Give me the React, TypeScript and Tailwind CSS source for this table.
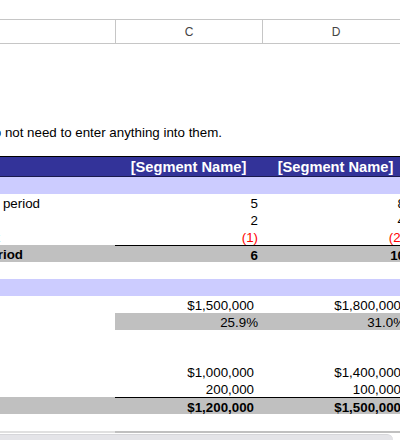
import React from 'react';

type Row = {
  label?: string;
  labelBox?: string;
  c?: string;
  d?: string;
  kind: 'plain' | 'total' | 'pct' | 'band' | 'blank';
  cur?: boolean;
  red?: boolean;
  line?: boolean;
};

const rows: Row[] = [
  { kind: 'band' },
  { label: 'Units at beginning of period', labelBox: 'w-[40px]', c: '5', d: '8', kind: 'plain' },
  { label: 'Units added', labelBox: 'w-[0px]', c: '2', d: '4', kind: 'plain' },
  { label: 'Units lost', labelBox: 'w-[0px]', c: '(1)', d: '(2)', kind: 'plain', red: true },
  { label: 'Units at end of period', labelBox: 'w-[23px]', c: '6', d: '10', kind: 'total', line: true },
  { kind: 'blank' },
  { kind: 'band' },
  { c: '$1,500,000', d: '$1,800,000', kind: 'plain', cur: true },
  { c: '25.9%', d: '31.0%', kind: 'pct' },
  { kind: 'blank' },
  { kind: 'blank' },
  { c: '$1,000,000', d: '$1,400,000', kind: 'plain', cur: true },
  { c: '200,000', d: '100,000', kind: 'plain', cur: true },
  { c: '$1,200,000', d: '$1,500,000', kind: 'total', cur: true, line: true },
  { kind: 'blank' },
];

function Cell({ v, row }: { v?: string; row: Row }) {
  const bg = row.kind === 'total' || row.kind === 'pct' ? 'bg-[#c0c0c0]' : '';
  const line = row.line ? 'border-t border-black' : '';
  const pad = row.cur ? 'pr-[8px]' : 'pr-[4px]';
  const weight = row.kind === 'total' ? 'font-bold' : '';
  const color = row.red ? 'text-[#ff0000]' : 'text-black';
  return (
    <div className={`h-[17px] pt-[2px] flex justify-end items-center ${bg} ${line} ${pad} ${weight} ${color}`}>
      {v}
    </div>
  );
}

export default function App() {
  return (
    <div className="w-[400px] h-[440px] overflow-hidden bg-white flex flex-col font-['Liberation_Sans',Arial,sans-serif] text-[13.33px] leading-[17px]">
      {/* column letters */}
      <div className="mt-[19px] h-[25px] border-y border-[#c6c6c6] grid grid-cols-[115px_147px_147px] text-[12px] text-[#444]">
        <div />
        <div className="border-l border-[#c6c6c6] pt-[2px] flex items-center justify-center">C</div>
        <div className="border-l border-[#c6c6c6] pt-[2px] flex items-center justify-center">D</div>
      </div>

      <div className="mt-[79px] h-[17px] pt-[1px] flex">
        <div className="w-[222px] shrink-0 flex justify-end whitespace-nowrap">
          These rows are calculated, so you do not need to enter anything into them.
        </div>
      </div>

      {/* segment header */}
      <div className="mt-[16px] h-[21px] border-t border-black bg-[#333399] grid grid-cols-[115px_147px_147px] text-white font-bold text-[14.67px]">
        <div />
        <div className="pt-[2px] flex items-center justify-center whitespace-nowrap">[Segment Name]</div>
        <div className="pt-[2px] flex items-center justify-center whitespace-nowrap">[Segment Name]</div>
      </div>
      <div className="h-px bg-[#1a1a4d]" />

      {rows.map((r, i) => {
        if (r.kind === 'band') return <div key={i} className="h-[17px] bg-[#ccccff]" />;
        if (r.kind === 'blank') return <div key={i} className="h-[17px]" />;
        const labelBg = r.kind === 'total' ? 'bg-[#c0c0c0]' : '';
        return (
          <div key={i} className="grid grid-cols-[115px_147px_147px] whitespace-nowrap">
            <div className={`h-[17px] pt-[2px] flex items-center ${labelBg} ${r.kind === 'total' ? 'font-bold' : ''}`}>
              {r.label && (
                <div className={`${r.labelBox} shrink-0 flex justify-end`}>{r.label}</div>
              )}
            </div>
            <Cell v={r.c} row={r} />
            <Cell v={r.d} row={r} />
          </div>
        );
      })}

      <div className="grid grid-cols-[115px_147px_147px] h-[2px]">
        <div className="bg-[#e0e0e0]" />
        <div className="bg-[#c0c0c0]" />
        <div className="bg-[#c0c0c0]" />
      </div>
      <div className="mt-[1px] w-[393px] h-[6px] bg-[#e4e4e8] border-t border-[#d6d6da] rounded-tr-[6px]" />
    </div>
  );
}
